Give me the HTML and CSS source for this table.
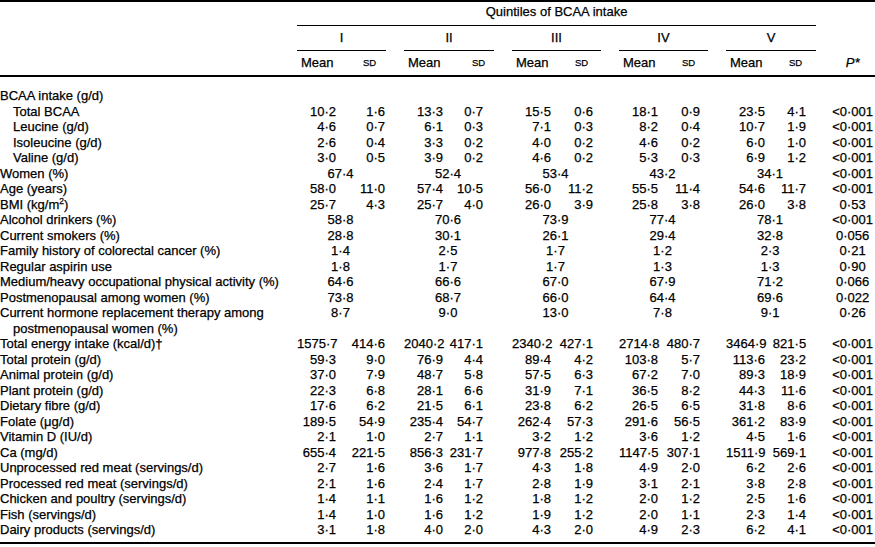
FILE: index.html
```html
<!DOCTYPE html>
<html>
<head>
<meta charset="utf-8">
<title>Quintiles of BCAA intake</title>
<link rel="stylesheet" href="styles.css">
</head>
<body>
<table class="tbl">
<colgroup>
<col class="w-label">
<col class="w-m"><col class="w-s47">
<col class="w-g">
<col class="w-m"><col class="w-s48">
<col class="w-g">
<col class="w-m"><col class="w-s47">
<col class="w-g">
<col class="w-m"><col class="w-s47">
<col class="w-g">
<col class="w-m"><col class="w-s48">
<col class="w-g2">
<col class="w-p">
</colgroup>
<thead>
<tr class="h1">
<th></th><th colspan="14" class="quint">Quintiles of BCAA intake</th><th></th><th></th>
</tr>
<tr class="h2">
<th></th>
<th colspan="2" class="grp">I</th><th></th>
<th colspan="2" class="grp">II</th><th></th>
<th colspan="2" class="grp">III</th><th></th>
<th colspan="2" class="grp">IV</th><th></th>
<th colspan="2" class="grp">V</th><th></th>
<th></th>
</tr>
<tr class="h3">
<th></th>
<th class="mh">Mean</th><th class="sh s1">SD</th><th></th>
<th class="mh">Mean</th><th class="sh s2">SD</th><th></th>
<th class="mh">Mean</th><th class="sh s3">SD</th><th></th>
<th class="mh">Mean</th><th class="sh s4">SD</th><th></th>
<th class="mh">Mean</th><th class="sh s5">SD</th><th></th>
<th class="ph"><i>P*</i></th>
</tr>
</thead>
<tbody>
<tr class="first"><td colspan="17" class="lab">BCAA intake (g/d)</td></tr>
<tr><td class="lab ind">Total BCAA</td><td class="m">10·2</td><td class="s s1">1·6</td><td></td><td class="m">13·3</td><td class="s s2">0·7</td><td></td><td class="m">15·5</td><td class="s s3">0·6</td><td></td><td class="m">18·1</td><td class="s s4">0·9</td><td></td><td class="m">23·5</td><td class="s s5">4·1</td><td></td><td class="p">&lt;0·001</td></tr>
<tr><td class="lab ind">Leucine (g/d)</td><td class="m">4·6</td><td class="s s1">0·7</td><td></td><td class="m">6·1</td><td class="s s2">0·3</td><td></td><td class="m">7·1</td><td class="s s3">0·3</td><td></td><td class="m">8·2</td><td class="s s4">0·4</td><td></td><td class="m">10·7</td><td class="s s5">1·9</td><td></td><td class="p">&lt;0·001</td></tr>
<tr><td class="lab ind">Isoleucine (g/d)</td><td class="m">2·6</td><td class="s s1">0·4</td><td></td><td class="m">3·3</td><td class="s s2">0·2</td><td></td><td class="m">4·0</td><td class="s s3">0·2</td><td></td><td class="m">4·6</td><td class="s s4">0·2</td><td></td><td class="m">6·0</td><td class="s s5">1·0</td><td></td><td class="p">&lt;0·001</td></tr>
<tr><td class="lab ind">Valine (g/d)</td><td class="m">3·0</td><td class="s s1">0·5</td><td></td><td class="m">3·9</td><td class="s s2">0·2</td><td></td><td class="m">4·6</td><td class="s s3">0·2</td><td></td><td class="m">5·3</td><td class="s s4">0·3</td><td></td><td class="m">6·9</td><td class="s s5">1·2</td><td></td><td class="p">&lt;0·001</td></tr>
<tr><td class="lab">Women (%)</td><td colspan="2" class="c">67·4</td><td></td><td colspan="2" class="c">52·4</td><td></td><td colspan="2" class="c">53·4</td><td></td><td colspan="2" class="c">43·2</td><td></td><td colspan="2" class="c">34·1</td><td></td><td class="p">&lt;0·001</td></tr>
<tr><td class="lab">Age (years)</td><td class="m">58·0</td><td class="s s1">11·0</td><td></td><td class="m">57·4</td><td class="s s2">10·5</td><td></td><td class="m">56·0</td><td class="s s3">11·2</td><td></td><td class="m">55·5</td><td class="s s4">11·4</td><td></td><td class="m">54·6</td><td class="s s5">11·7</td><td></td><td class="p">&lt;0·001</td></tr>
<tr><td class="lab">BMI (kg/m<sup>2</sup>)</td><td class="m">25·7</td><td class="s s1">4·3</td><td></td><td class="m">25·7</td><td class="s s2">4·0</td><td></td><td class="m">26·0</td><td class="s s3">3·9</td><td></td><td class="m">25·8</td><td class="s s4">3·8</td><td></td><td class="m">26·0</td><td class="s s5">3·8</td><td></td><td class="p">0·53</td></tr>
<tr><td class="lab">Alcohol drinkers (%)</td><td colspan="2" class="c">58·8</td><td></td><td colspan="2" class="c">70·6</td><td></td><td colspan="2" class="c">73·9</td><td></td><td colspan="2" class="c">77·4</td><td></td><td colspan="2" class="c">78·1</td><td></td><td class="p">&lt;0·001</td></tr>
<tr><td class="lab">Current smokers (%)</td><td colspan="2" class="c">28·8</td><td></td><td colspan="2" class="c">30·1</td><td></td><td colspan="2" class="c">26·1</td><td></td><td colspan="2" class="c">29·4</td><td></td><td colspan="2" class="c">32·8</td><td></td><td class="p">0·056</td></tr>
<tr><td class="lab">Family history of colorectal cancer (%)</td><td colspan="2" class="c">1·4</td><td></td><td colspan="2" class="c">2·5</td><td></td><td colspan="2" class="c">1·7</td><td></td><td colspan="2" class="c">1·2</td><td></td><td colspan="2" class="c">2·3</td><td></td><td class="p">0·21</td></tr>
<tr><td class="lab">Regular aspirin use</td><td colspan="2" class="c">1·8</td><td></td><td colspan="2" class="c">1·7</td><td></td><td colspan="2" class="c">1·7</td><td></td><td colspan="2" class="c">1·3</td><td></td><td colspan="2" class="c">1·3</td><td></td><td class="p">0·90</td></tr>
<tr><td class="lab">Medium/heavy occupational physical activity (%)</td><td colspan="2" class="c">64·6</td><td></td><td colspan="2" class="c">66·6</td><td></td><td colspan="2" class="c">67·0</td><td></td><td colspan="2" class="c">67·9</td><td></td><td colspan="2" class="c">71·2</td><td></td><td class="p">0·066</td></tr>
<tr><td class="lab">Postmenopausal among women (%)</td><td colspan="2" class="c">73·8</td><td></td><td colspan="2" class="c">68·7</td><td></td><td colspan="2" class="c">66·0</td><td></td><td colspan="2" class="c">64·4</td><td></td><td colspan="2" class="c">69·6</td><td></td><td class="p">0·022</td></tr>
<tr><td class="lab hang">Current hormone replacement therapy among<br>postmenopausal women (%)</td><td colspan="2" class="c">8·7</td><td></td><td colspan="2" class="c">9·0</td><td></td><td colspan="2" class="c">13·0</td><td></td><td colspan="2" class="c">7·8</td><td></td><td colspan="2" class="c">9·1</td><td></td><td class="p">0·26</td></tr>
<tr><td class="lab">Total energy intake (kcal/d)†</td><td class="m">1575·7</td><td class="s s1">414·6</td><td></td><td class="m">2040·2</td><td class="s s2">417·1</td><td></td><td class="m">2340·2</td><td class="s s3">427·1</td><td></td><td class="m">2714·8</td><td class="s s4">480·7</td><td></td><td class="m">3464·9</td><td class="s s5">821·5</td><td></td><td class="p">&lt;0·001</td></tr>
<tr><td class="lab">Total protein (g/d)</td><td class="m">59·3</td><td class="s s1">9·0</td><td></td><td class="m">76·9</td><td class="s s2">4·4</td><td></td><td class="m">89·4</td><td class="s s3">4·2</td><td></td><td class="m">103·8</td><td class="s s4">5·7</td><td></td><td class="m">113·6</td><td class="s s5">23·2</td><td></td><td class="p">&lt;0·001</td></tr>
<tr><td class="lab">Animal protein (g/d)</td><td class="m">37·0</td><td class="s s1">7·9</td><td></td><td class="m">48·7</td><td class="s s2">5·8</td><td></td><td class="m">57·5</td><td class="s s3">6·3</td><td></td><td class="m">67·2</td><td class="s s4">7·0</td><td></td><td class="m">89·3</td><td class="s s5">18·9</td><td></td><td class="p">&lt;0·001</td></tr>
<tr><td class="lab">Plant protein (g/d)</td><td class="m">22·3</td><td class="s s1">6·8</td><td></td><td class="m">28·1</td><td class="s s2">6·6</td><td></td><td class="m">31·9</td><td class="s s3">7·1</td><td></td><td class="m">36·5</td><td class="s s4">8·2</td><td></td><td class="m">44·3</td><td class="s s5">11·6</td><td></td><td class="p">&lt;0·001</td></tr>
<tr><td class="lab">Dietary fibre (g/d)</td><td class="m">17·6</td><td class="s s1">6·2</td><td></td><td class="m">21·5</td><td class="s s2">6·1</td><td></td><td class="m">23·8</td><td class="s s3">6·2</td><td></td><td class="m">26·5</td><td class="s s4">6·5</td><td></td><td class="m">31·8</td><td class="s s5">8·6</td><td></td><td class="p">&lt;0·001</td></tr>
<tr><td class="lab">Folate (μg/d)</td><td class="m">189·5</td><td class="s s1">54·9</td><td></td><td class="m">235·4</td><td class="s s2">54·7</td><td></td><td class="m">262·4</td><td class="s s3">57·3</td><td></td><td class="m">291·6</td><td class="s s4">56·5</td><td></td><td class="m">361·2</td><td class="s s5">83·9</td><td></td><td class="p">&lt;0·001</td></tr>
<tr><td class="lab">Vitamin D (IU/d)</td><td class="m">2·1</td><td class="s s1">1·0</td><td></td><td class="m">2·7</td><td class="s s2">1·1</td><td></td><td class="m">3·2</td><td class="s s3">1·2</td><td></td><td class="m">3·6</td><td class="s s4">1·2</td><td></td><td class="m">4·5</td><td class="s s5">1·6</td><td></td><td class="p">&lt;0·001</td></tr>
<tr><td class="lab">Ca (mg/d)</td><td class="m">655·4</td><td class="s s1">221·5</td><td></td><td class="m">856·3</td><td class="s s2">231·7</td><td></td><td class="m">977·8</td><td class="s s3">255·2</td><td></td><td class="m">1147·5</td><td class="s s4">307·1</td><td></td><td class="m">1511·9</td><td class="s s5">569·1</td><td></td><td class="p">&lt;0·001</td></tr>
<tr><td class="lab">Unprocessed red meat (servings/d)</td><td class="m">2·7</td><td class="s s1">1·6</td><td></td><td class="m">3·6</td><td class="s s2">1·7</td><td></td><td class="m">4·3</td><td class="s s3">1·8</td><td></td><td class="m">4·9</td><td class="s s4">2·0</td><td></td><td class="m">6·2</td><td class="s s5">2·6</td><td></td><td class="p">&lt;0·001</td></tr>
<tr><td class="lab">Processed red meat (servings/d)</td><td class="m">2·1</td><td class="s s1">1·6</td><td></td><td class="m">2·4</td><td class="s s2">1·7</td><td></td><td class="m">2·8</td><td class="s s3">1·9</td><td></td><td class="m">3·1</td><td class="s s4">2·1</td><td></td><td class="m">3·8</td><td class="s s5">2·8</td><td></td><td class="p">&lt;0·001</td></tr>
<tr><td class="lab">Chicken and poultry (servings/d)</td><td class="m">1·4</td><td class="s s1">1·1</td><td></td><td class="m">1·6</td><td class="s s2">1·2</td><td></td><td class="m">1·8</td><td class="s s3">1·2</td><td></td><td class="m">2·0</td><td class="s s4">1·2</td><td></td><td class="m">2·5</td><td class="s s5">1·6</td><td></td><td class="p">&lt;0·001</td></tr>
<tr><td class="lab">Fish (servings/d)</td><td class="m">1·4</td><td class="s s1">1·0</td><td></td><td class="m">1·6</td><td class="s s2">1·2</td><td></td><td class="m">1·9</td><td class="s s3">1·2</td><td></td><td class="m">2·0</td><td class="s s4">1·1</td><td></td><td class="m">2·3</td><td class="s s5">1·4</td><td></td><td class="p">&lt;0·001</td></tr>
<tr class="last"><td class="lab">Dairy products (servings/d)</td><td class="m">3·1</td><td class="s s1">1·8</td><td></td><td class="m">4·0</td><td class="s s2">2·0</td><td></td><td class="m">4·3</td><td class="s s3">2·0</td><td></td><td class="m">4·9</td><td class="s s4">2·3</td><td></td><td class="m">6·2</td><td class="s s5">4·1</td><td></td><td class="p">&lt;0·001</td></tr>
</tbody>
</table>
</body>
</html>
```

FILE: styles.css
```css
* { box-sizing: border-box; }
html, body { margin: 0; padding: 0; background: #fff; }
body {
  font-family: "Liberation Sans", Arial, sans-serif;
  font-size: 13px;
  line-height: 15.5px;
  color: #000;
  -webkit-text-stroke: 0.25px #000;
}
.tbl {
  width: 875px;
  table-layout: fixed;
  border-collapse: separate;
  border-spacing: 0;
  border-top: 2px solid #000;
  border-bottom: 2px solid #000;
}
.tbl th, .tbl td {
  padding: 0;
  font-weight: normal;
  white-space: nowrap;
  vertical-align: top;
  text-align: left;
}
.w-label { width: 297px; }
.w-m { width: 42px; }
.w-s47 { width: 47px; }
.w-s48 { width: 48px; }
.w-g { width: 18px; }
.w-g2 { width: 14px; }
.w-p { width: 45px; }

/* header rows */
thead th { line-height: 16px; }
.h1 th { padding-top: 2px; padding-bottom: 5px; }
.h1 .quint { text-align: center; border-bottom: 1px solid #000; }
.h2 th { padding-top: 4px; padding-bottom: 4px; }
.h2 .grp { text-align: center; border-bottom: 1px solid #000; }
.h3 th { padding-top: 4px; padding-bottom: 4px; border-bottom: 2px solid #000; }
.h3 .mh { padding-left: 4px; }
.h3 .sh { font-size: 9.5px; padding-left: 21px; }
.h3 .sh.s1 { padding-left: 24px; }
.h3 .sh.s2 { padding-left: 26px; }
.h3 .ph { text-align: center; }
.h3 .ph i { font-style: italic; }

/* body */
tbody tr.first td { padding-top: 11px; }
tbody tr.last td { padding-bottom: 4.5px; }
.lab { text-align: left; }
.ind { padding-left: 13px !important; }
.hang { white-space: normal !important; padding-left: 13px !important; text-indent: -13px; }
td.m { text-align: right; padding-right: 3px; }
td.s { text-align: right; }
td.s1 { padding-right: 1px; }
td.s2 { padding-right: 11px; }
td.s3 { padding-right: 8px; }
td.s4 { padding-right: 8px; }
td.s5 { padding-right: 10px; }
td.c { text-align: center; padding-right: 2px; }
td.p { text-align: center; }
sup { font-size: 8.5px; line-height: 0; vertical-align: 5px; }
```
